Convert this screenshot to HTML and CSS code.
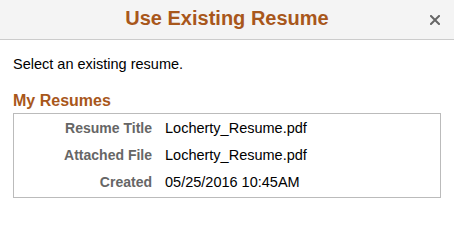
FILE: index.html
```html
<!DOCTYPE html>
<html lang="en">
<head>
<meta charset="utf-8">
<title>Use Existing Resume</title>
<link rel="stylesheet" href="styles.css">
</head>
<body>
<div class="dialog">
  <header class="dlg-header">
    <span class="spacer"></span>
    <h1 class="dlg-title">Use Existing Resume</h1>
    <button class="dlg-close" aria-label="Close">
      <svg width="10" height="10" viewBox="0 0 10 10" aria-hidden="true">
        <path d="M1 1 L9 9 M9 1 L1 9" stroke="#666" stroke-width="2" stroke-linecap="square" fill="none"/>
      </svg>
    </button>
  </header>
  <main class="dlg-body">
    <p class="intro">Select an existing resume.</p>
    <h2 class="section-title">My Resumes</h2>
    <div class="resume-box">
      <div class="field-label">Resume Title</div>
      <div class="field-value">Locherty_Resume.pdf</div>
      <div class="field-label">Attached File</div>
      <div class="field-value">Locherty_Resume.pdf</div>
      <div class="field-label">Created</div>
      <div class="field-value">05/25/2016 10:45AM</div>
    </div>
  </main>
</div>
</body>
</html>
```

FILE: styles.css
```css
html, body {
  margin: 0;
  padding: 0;
  background: #ffffff;
}
body {
  font-family: "Liberation Sans", Arial, sans-serif;
  color: #000;
}
.dlg-header {
  height: 39px;
  background: #f4f4f4;
  border-bottom: 1px solid #cccccc;
  display: grid;
  grid-template-columns: 1fr auto 1fr;
  align-items: start;
}
.dlg-title {
  margin: 0;
  font-size: 20px;
  font-weight: bold;
  line-height: 36px;
  color: #a8571b;
  text-align: center;
}
.dlg-close {
  justify-self: end;
  margin: 15px 14px 0 0;
  padding: 0;
  border: 0;
  background: none;
  width: 10px;
  height: 10px;
  display: flex;
}
.dlg-body {
  padding: 15px 13px 0 13px;
}
.intro {
  margin: 0;
  font-size: 14.5px;
  line-height: 18px;
}
.section-title {
  margin: 19px 0 3px 0;
  font-size: 16px;
  font-weight: bold;
  line-height: 18px;
  color: #a8571b;
}
.resume-box {
  border: 1px solid #bbbbbb;
  padding: 1px 0 1px 0;
  display: grid;
  grid-template-columns: 138px 1fr;
  column-gap: 13px;
  align-items: baseline;
}
.field-label {
  font-size: 14px;
  font-weight: bold;
  line-height: 27px;
  color: #666666;
  text-align: right;
}
.field-value {
  font-size: 14.5px;
  line-height: 27px;
  color: #000;
}
```
